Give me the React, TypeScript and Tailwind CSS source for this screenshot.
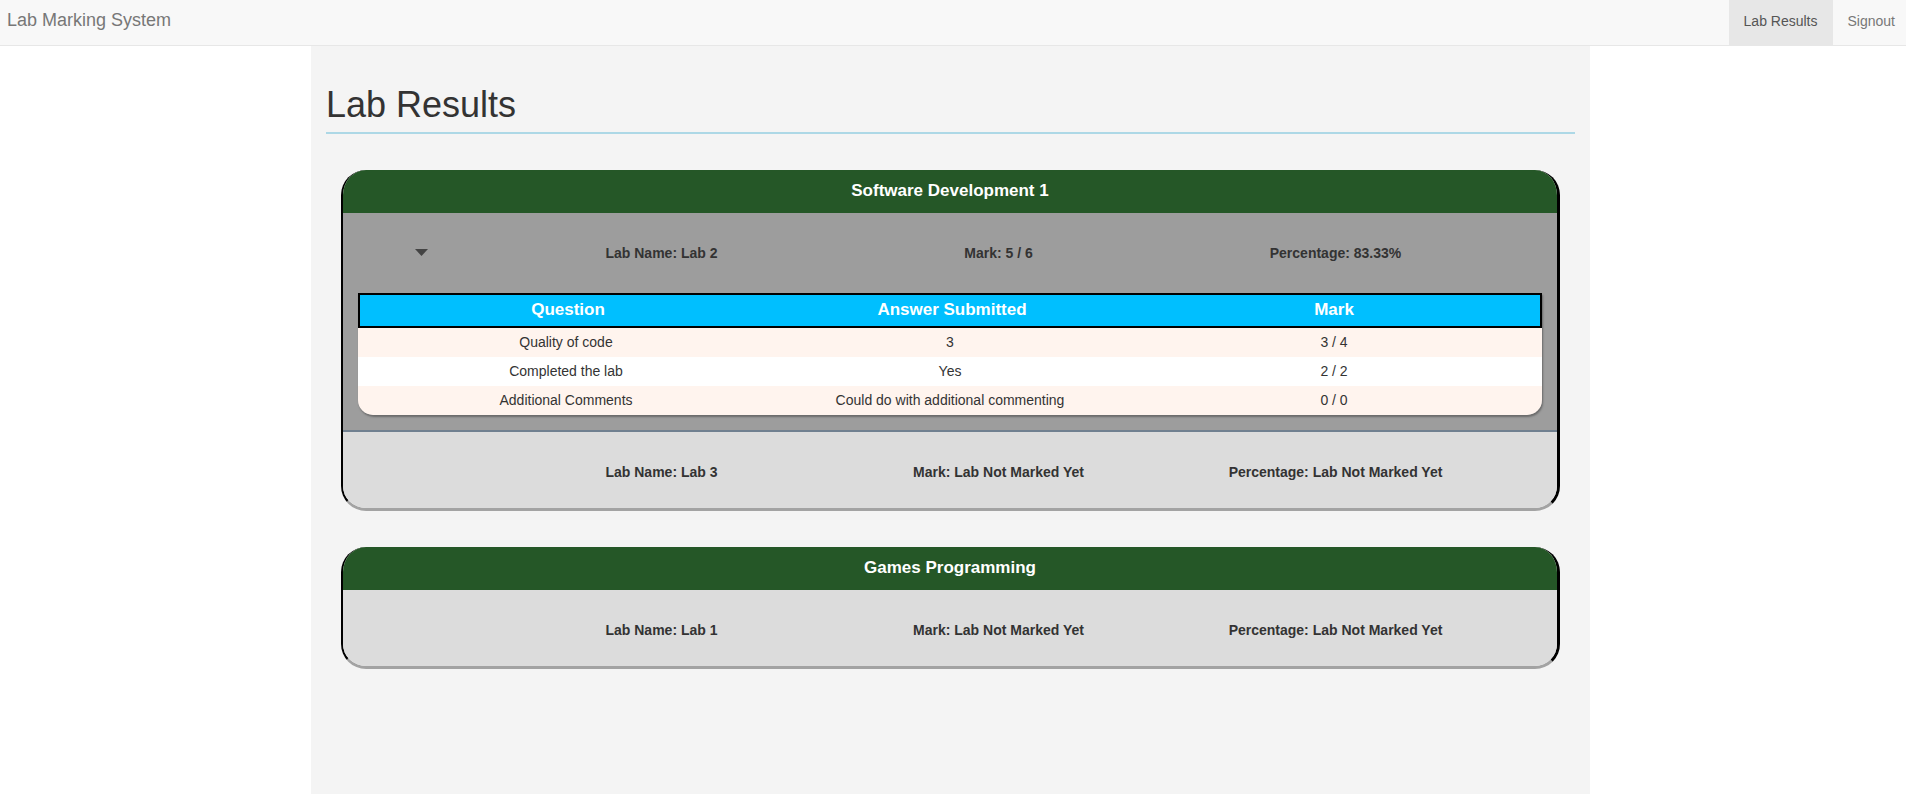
import React from "react";

type Answer = { question: string; answer: string; mark: string };
type Lab = { name: string; mark: string; percentage: string; answers?: Answer[] };
type Module = { title: string; labs: Lab[] };

const MODULES: Module[] = [
  {
    title: "Software Development 1",
    labs: [
      {
        name: "Lab 2",
        mark: "5 / 6",
        percentage: "83.33%",
        answers: [
          { question: "Quality of code", answer: "3", mark: "3 / 4" },
          { question: "Completed the lab", answer: "Yes", mark: "2 / 2" },
          { question: "Additional Comments", answer: "Could do with additional commenting", mark: "0 / 0" },
        ],
      },
      { name: "Lab 3", mark: "Lab Not Marked Yet", percentage: "Lab Not Marked Yet" },
    ],
  },
  {
    title: "Games Programming",
    labs: [{ name: "Lab 1", mark: "Lab Not Marked Yet", percentage: "Lab Not Marked Yet" }],
  },
];

function LabRow({ lab }: { lab: Lab }) {
  const open = !!lab.answers;
  return (
    <div
      className={
        open
          ? "border-b-2 border-[#708090] bg-[#9d9d9d] pb-[15px]"
          : "bg-[#dcdcdc] pb-[26px]"
      }
    >
      <div className="grid h-[50px] grid-cols-[150px_337px_337px_337px_1fr] items-end text-[14px] font-bold text-[#333]">
        <div className="flex h-[20px] items-center justify-center pl-[6px]">
          {open && (
            <svg width="13" height="7" viewBox="0 0 13 7">
              <polygon points="0,0 13,0 6.5,7" fill="#444" />
            </svg>
          )}
        </div>
        <div className="h-[20px] text-center leading-[20px]">Lab Name: {lab.name}</div>
        <div className="h-[20px] text-center leading-[20px]">Mark: {lab.mark}</div>
        <div className="h-[20px] text-center leading-[20px]">Percentage: {lab.percentage}</div>
      </div>

      {open && (
        <div className="mx-[15px] mt-[30px] overflow-hidden rounded-b-[15px] shadow-[1px_2px_2px_#6b6b6b]">
          <div className="grid h-[35px] grid-cols-[416px_352px_1fr] items-center border-2 border-black bg-[#00bfff] text-center text-[17px] font-bold text-white">
            <div>Question</div>
            <div>Answer Submitted</div>
            <div>Mark</div>
          </div>
          {lab.answers!.map((a, i) => (
            <div
              key={a.question}
              className={
                "grid h-[29px] grid-cols-[416px_352px_1fr] items-center text-center text-[14px] text-[#333] " +
                (i % 2 === 1 ? "bg-white" : "bg-[#fff4ee]")
              }
            >
              <div>{a.question}</div>
              <div>{a.answer}</div>
              <div>{a.mark}</div>
            </div>
          ))}
        </div>
      )}
    </div>
  );
}

export default function App() {
  return (
    <div className="flex min-h-screen flex-col bg-white font-['Liberation_Sans',Arial,sans-serif]">
      <nav className="flex h-[46px] shrink-0 justify-between border-b border-[#e7e7e7] bg-[#f8f8f8]">
        <a className="pl-[7px] text-[18px] leading-[41px] text-[#777]">Lab Marking System</a>
        <ul className="flex">
          <li className="bg-[#e7e7e7] px-[15px] text-[14px] leading-[42px] text-[#555]">Lab Results</li>
          <li className="pr-[11px] pl-[15px] text-[14px] leading-[42px] text-[#777]">Signout</li>
        </ul>
      </nav>

      <main className="ml-[311px] w-[1279px] flex-1 bg-[#f4f4f4] px-[15px] pt-[39px] pb-10">
        <h1 className="border-b-2 border-[#add8e6] pb-[7px] text-[36px] leading-[39.6px] font-normal text-[#333]">
          Lab Results
        </h1>

        {MODULES.map((m) => (
          <section
            key={m.title}
            className="mx-[15px] mt-[36px] overflow-hidden rounded-[25px] border-r-[3px] border-b-[3px] border-l-2 border-r-black border-b-[#a3a3a3] border-l-black"
          >
            <div className="flex h-[43px] items-center justify-center bg-[#255727] text-[17px] font-bold text-white">
              {m.title}
            </div>
            {m.labs.map((lab) => (
              <LabRow key={lab.name} lab={lab} />
            ))}
          </section>
        ))}
      </main>
    </div>
  );
}
